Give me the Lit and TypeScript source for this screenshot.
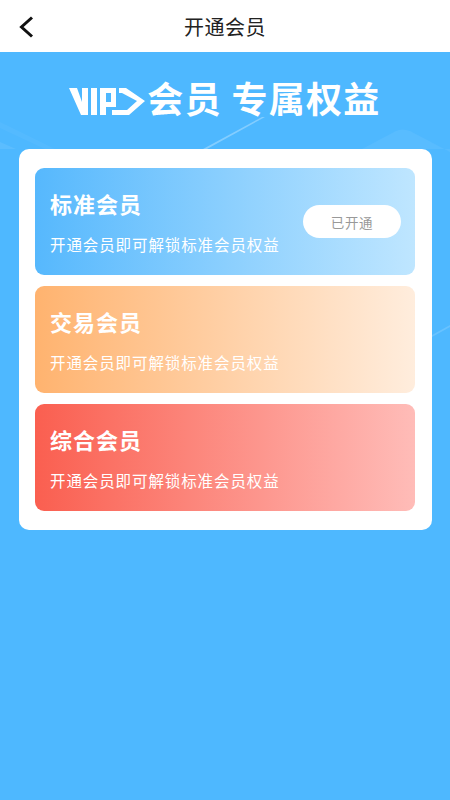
import { LitElement, html, css } from "lit";
import { customElement } from "lit/decorators.js";

const CARDS = [
  { name: "标准会员", cls: "blue", owned: true },
  { name: "交易会员", cls: "orange", owned: false },
  { name: "综合会员", cls: "red", owned: false },
];

@customElement("app-root")
export class AppRoot extends LitElement {
  static styles = css`
    :host {
      display: block;
      width: 450px;
      height: 800px;
      overflow: hidden;
      font-family: "Noto Sans CJK SC", "Noto Sans", sans-serif;
    }
    .page {
      height: 800px;
      display: flex;
      flex-direction: column;
      background: #4eb8ff;
    }
    .nav {
      height: 52px;
      flex: none;
      background: #fff;
      display: grid;
      grid-template-columns: 52px 1fr 52px;
      align-items: center;
    }
    .back {
      width: 16px;
      height: 22px;
      margin-left: 18px;
      display: block;
    }
    .nav-title {
      text-align: center;
      font-size: 20px;
      line-height: 54px;
      color: #222;
      letter-spacing: 0.5px;
    }
    .hero {
      position: relative;
      flex: none;
      height: 97px;
      display: flex;
      align-items: flex-start;
      justify-content: center;
      padding-top: 25px;
      box-sizing: border-box;
      gap: 1px;
    }
    .deco {
      position: absolute;
      left: 0;
      top: 0;
      width: 450px;
      height: 300px;
    }
    .logo {
      width: 77px;
      height: 32px;
      flex: none;
      position: relative;
      margin-top: 8px;
    }
    .hero-title {
      position: relative;
      font-size: 36px;
      line-height: 40px;
      font-weight: 700;
      color: #fff;
      white-space: nowrap;
      letter-spacing: 1.3px;
    }
    .panel {
      position: relative;
      margin: 0 18px 0 19px;
      background: #fff;
      border-radius: 10px;
      padding: 19px 17px 19px 16px;
      display: flex;
      flex-direction: column;
      gap: 11px;
    }
    .card {
      height: 107px;
      border-radius: 9px;
      box-sizing: border-box;
      padding: 19px 14px 0 15px;
      display: grid;
      grid-template-columns: 1fr auto;
      color: #fff;
      position: relative;
    }
    .blue { background: linear-gradient(90deg, #56b8fd, #bfe6ff); }
    .orange { background: linear-gradient(90deg, #ffb36f, #ffeddd); }
    .red { background: linear-gradient(90deg, #fa5f50, #ffbcb8); }
    .name {
      font-size: 22px;
      line-height: 32px;
      font-weight: 700;
      letter-spacing: 1px;
    }
    .desc {
      font-size: 15.5px;
      line-height: 24px;
      margin-top: 13px;
      letter-spacing: 0.9px;
      white-space: nowrap;
    }
    .badge {
      width: 98px;
      height: 33px;
      margin-top: 18px;
      border-radius: 17px;
      background: #fff;
      color: #999;
      font-size: 13.5px;
      line-height: 35px;
      text-align: center;
      letter-spacing: 0.7px;
    }
  `;

  render() {
    return html`
      <div class="page">
        <div class="nav">
          <svg class="back" viewBox="0 0 16 22">
            <path d="M14 1.5 L3.5 11 L14 20.5" fill="none" stroke="#111" stroke-width="3" />
          </svg>
          <div class="nav-title">开通会员</div>
          <span></span>
        </div>
        <div class="hero">
          <svg class="deco" viewBox="0 0 450 300">
            <path d="M203 97 L262 65 L265 65 L207 97 Z" fill="#fff" opacity="0.3" />
            <path d="M362 97 L396 79 Q402 76 410 79 L450 100 L450 97 Z" fill="#fff" opacity="0.06" />
            <path d="M0 70 L55 97 L45 97 L0 76 Z" fill="#fff" opacity="0.04" />
            <path d="M0 90 L16 97 L0 97 Z" fill="#fff" opacity="0.08" />
            <path d="M432 283 L450 273 V275 L432 285 Z" fill="#fff" opacity="0.15" />
          </svg>
          <svg class="logo" viewBox="0 0 77 32">
            <g fill="#fff">
              <path d="M0 3 H8 L13 17 V3 H19 V30 H12 Z" />
              <path d="M22 3 H28 V30 H22 Z" />
              <path fill-rule="evenodd" d="M31 3 H47 V22 H37 V30 H31 Z M37 8 V17 H42 V8 Z" />
              <path d="M50 3 H57 L76 16 L60 30 H43 V25 H58 L68 16 L53 8 H50 Z" />
            </g>
          </svg>
          <div class="hero-title">会员 专属权益</div>
        </div>
        <div class="panel">
          ${CARDS.map(
            (c) => html`
              <div class="card ${c.cls}">
                <div>
                  <div class="name">${c.name}</div>
                  <div class="desc">开通会员即可解锁标准会员权益</div>
                </div>
                ${c.owned ? html`<div class="badge">已开通</div>` : ""}
              </div>
            `
          )}
        </div>
      </div>
    `;
  }
}
